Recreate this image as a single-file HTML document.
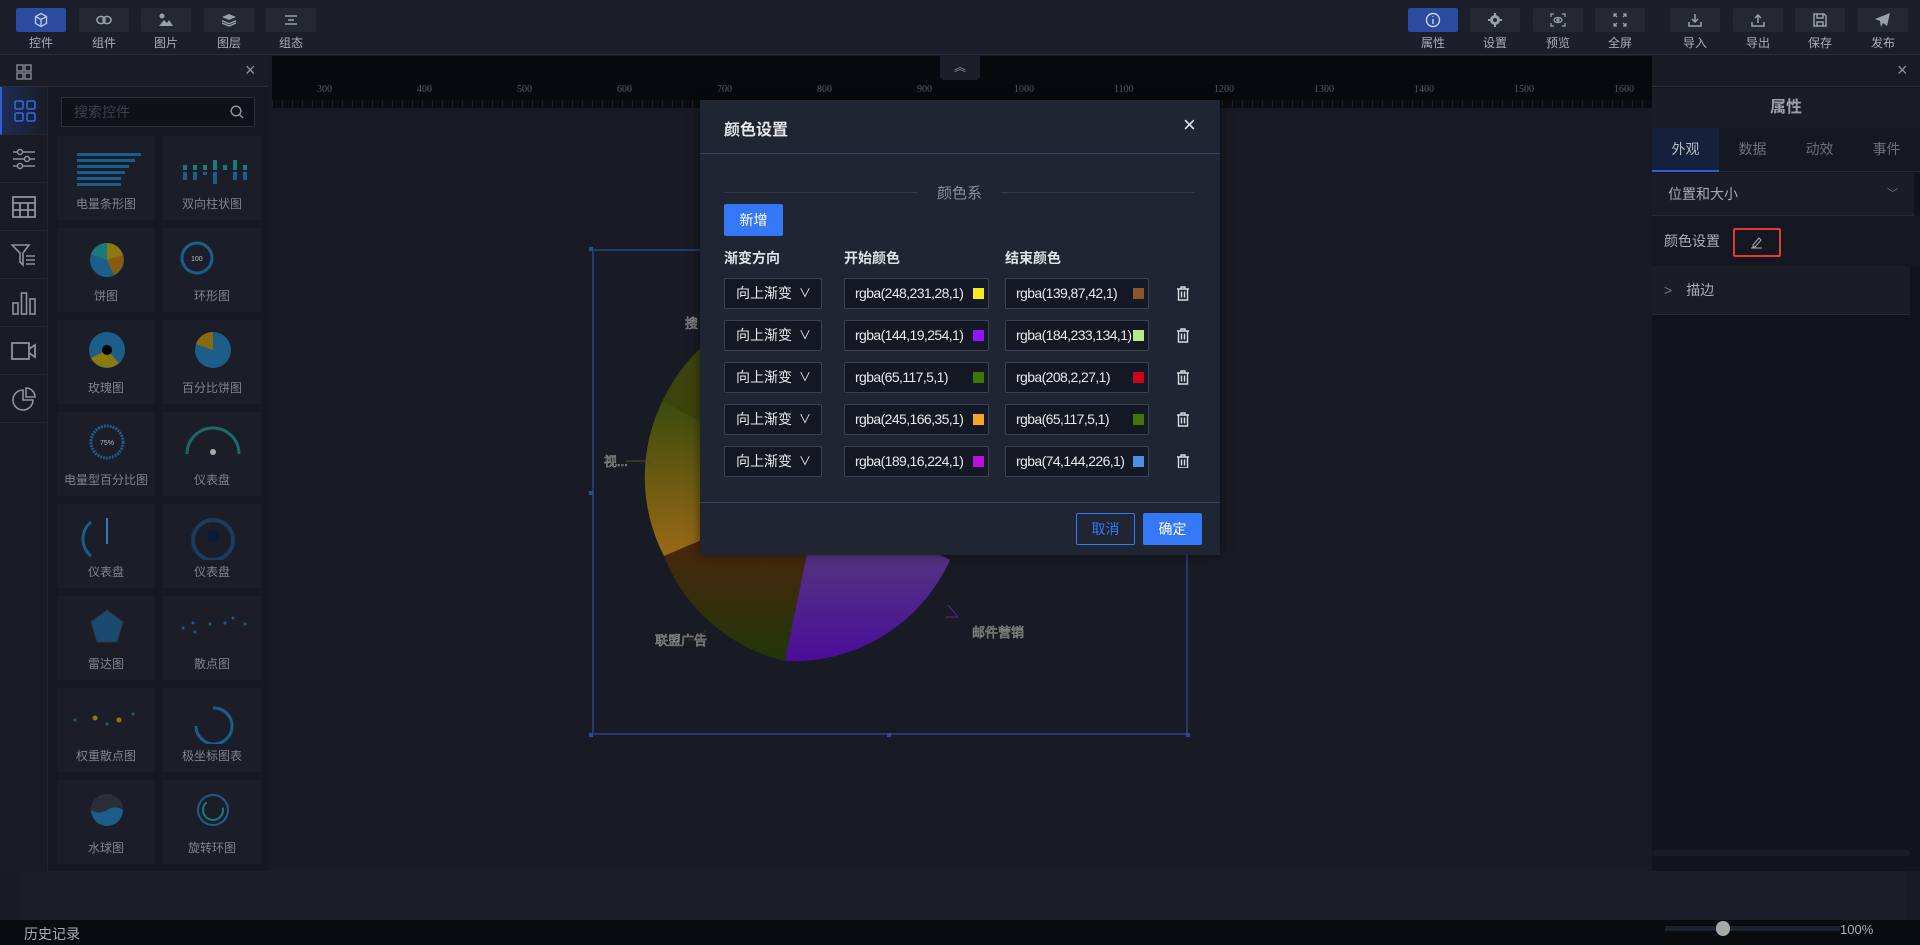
<!DOCTYPE html>
<html><head><meta charset="utf-8"><style>
*{margin:0;padding:0;box-sizing:border-box}
body{width:1920px;height:945px;overflow:hidden;background:#181b24;font-family:"Liberation Sans","Noto Sans CJK SC",sans-serif;color:#c8ccd4;position:relative;font-size:14px}
.abs{position:absolute}
.top{left:0;top:0;width:1920px;height:55px;background:#1c1f29;border-bottom:1px solid #2a2e3a}
.tb{position:absolute;top:8px;width:50px;height:24px;background:#242833;border-radius:2px;display:flex;align-items:center;justify-content:center}
.tb.on{background:#2a4b9e}
.tl{position:absolute;top:34px;width:50px;text-align:center;font-size:12px;color:#a8adb8}
.card{position:absolute;width:98px;height:84px;background:#1b1e28}
.card span{position:absolute;left:0;right:0;bottom:8px;text-align:center;font-size:12px;color:#7d8390}
.ic{position:absolute;left:0;width:47px;height:48px;border-bottom:1px solid #232733;display:flex;align-items:center;justify-content:center}
.in{position:absolute;height:31px;background:#141824;border:1px solid #3a4254;border-radius:2px;color:#e6e8ec;font-size:14px;line-height:29px;white-space:nowrap}
.in.c{font-size:14px;letter-spacing:-0.6px;padding-left:10px}
.sw{position:absolute;right:4px;top:9px;width:11px;height:11px}
</style></head><body>

<div class="abs top">
 <div class="tb on" style="left:16px"><svg width="16" height="16" viewBox="0 0 16 16" fill="none" stroke="#b9c6e8" stroke-width="1.4"><path d="M8 1.5l5.5 3v7L8 14.5 2.5 11.5v-7zM2.5 4.5L8 7.5l5.5-3M8 7.5v7"/></svg></div><div class="tl" style="left:16px">控件</div>
 <div class="tb" style="left:79px"><svg width="16" height="10" viewBox="0 0 16 10" fill="none" stroke="#9aa0ab" stroke-width="1.6"><rect x="1" y="1.5" width="8" height="7" rx="3.5"/><rect x="7" y="1.5" width="8" height="7" rx="3.5"/></svg></div><div class="tl" style="left:79px">组件</div>
 <div class="tb" style="left:141px"><svg width="16" height="14" viewBox="0 0 16 14" fill="#9aa0ab"><circle cx="4" cy="3" r="2.5"/><path d="M1 13l5-6 3 3 2-3 4 6z"/></svg></div><div class="tl" style="left:141px">图片</div>
 <div class="tb" style="left:204px"><svg width="16" height="14" viewBox="0 0 16 14" fill="#9aa0ab"><path d="M8 1l7 3-7 3-7-3z"/><path d="M1 7l7 3 7-3v1.5l-7 3-7-3z"/><path d="M1 10l7 3 7-3" stroke="#9aa0ab" fill="none" stroke-width="1.3"/></svg></div><div class="tl" style="left:204px">图层</div>
 <div class="tb" style="left:266px"><svg width="14" height="10" viewBox="0 0 14 10" stroke="#9aa0ab" stroke-width="1.4"><path d="M1 1h12M4 5h6M1 9h12"/></svg></div><div class="tl" style="left:266px">组态</div>

 <div class="tb on" style="left:1408px"><svg width="16" height="16" viewBox="0 0 16 16" fill="none" stroke="#c9d3ee" stroke-width="1.4"><circle cx="8" cy="8" r="6.5"/><path d="M8 7v5M8 4.2v.8"/></svg></div><div class="tl" style="left:1408px">属性</div>
 <div class="tb" style="left:1470px"><svg width="14" height="14" viewBox="0 0 14 14" fill="#9aa0ab"><circle cx="7" cy="7" r="5"/><path d="M6 0h2v14H6zM0 6h14v2H0z"/><circle cx="7" cy="7" r="2" fill="#242833"/></svg></div><div class="tl" style="left:1470px">设置</div>
 <div class="tb" style="left:1533px"><svg width="16" height="14" viewBox="0 0 16 14" fill="none" stroke="#9aa0ab" stroke-width="1.3"><path d="M1 4V1h3M12 1h3v3M15 10v3h-3M4 13H1v-3"/><ellipse cx="8" cy="7" rx="4" ry="2.5"/><circle cx="8" cy="7" r="1" fill="#9aa0ab"/></svg></div><div class="tl" style="left:1533px">预览</div>
 <div class="tb" style="left:1595px"><svg width="14" height="14" viewBox="0 0 14 14" fill="none" stroke="#9aa0ab" stroke-width="1.3"><path d="M1 4V1h3M1 1l3 3M13 4V1h-3M13 1l-3 3M1 10v3h3M1 13l3-3M13 10v3h-3M13 13l-3-3"/></svg></div><div class="tl" style="left:1595px">全屏</div>
 <div class="tb" style="left:1670px"><svg width="14" height="14" viewBox="0 0 14 14" fill="none" stroke="#9aa0ab" stroke-width="1.5"><path d="M7 1v8M4 6l3 3 3-3M1 9v4h12V9"/></svg></div><div class="tl" style="left:1670px">导入</div>
 <div class="tb" style="left:1733px"><svg width="14" height="14" viewBox="0 0 14 14" fill="none" stroke="#9aa0ab" stroke-width="1.5"><path d="M7 10V2M4 5l3-3 3 3M1 9v4h12V9"/></svg></div><div class="tl" style="left:1733px">导出</div>
 <div class="tb" style="left:1795px"><svg width="14" height="14" viewBox="0 0 14 14" fill="none" stroke="#9aa0ab" stroke-width="1.5"><path d="M1 1h10l2 2v10H1z"/><path d="M4 1v4h6V1M4 13V9h6v4"/></svg></div><div class="tl" style="left:1795px">保存</div>
 <div class="tb" style="left:1858px"><svg width="16" height="14" viewBox="0 0 16 14" fill="#9aa0ab"><path d="M15 0L0 6l5 2 1 6 2-4 4 3z"/></svg></div><div class="tl" style="left:1858px">发布</div>
</div>

<!-- ruler -->
<div class="abs" style="left:272px;top:56px;width:1380px;height:44px;background:#08090d"></div>
<div class="abs" style="left:272px;top:100px;width:1380px;height:8px;background:#0b0c11"></div>
<div class="abs" style="left:940px;top:56px;width:40px;height:24px;background:#1c1f29;border-radius:0 0 4px 4px;text-align:center;color:#8a8f9a;font-size:12px;line-height:22px">︽</div>
<div class="abs" style="left:272px;top:84px;width:1380px;font-family:'Liberation Serif',serif;font-size:10px;color:#555a64">
 <span class="abs" style="left:45px">300</span><span class="abs" style="left:145px">400</span><span class="abs" style="left:245px">500</span><span class="abs" style="left:345px">600</span><span class="abs" style="left:445px">700</span><span class="abs" style="left:545px">800</span><span class="abs" style="left:645px">900</span><span class="abs" style="left:742px">1000</span><span class="abs" style="left:842px">1100</span><span class="abs" style="left:942px">1200</span><span class="abs" style="left:1042px">1300</span><span class="abs" style="left:1142px">1400</span><span class="abs" style="left:1242px">1500</span><span class="abs" style="left:1342px">1600</span>
</div>
<div class="abs" style="left:272px;top:100px;width:1380px;height:7px;background:repeating-linear-gradient(90deg,#2a2d36 0 1px,transparent 1px 10px);opacity:.6"></div>

<!-- canvas chart -->
<div class="abs" style="left:592px;top:249px;width:596px;height:486px;border:2px solid #24396e"></div>
<svg class="abs" style="left:0;top:0" width="1920" height="945">
 <defs>
  <linearGradient id="g1" x1="0" y1="1" x2="0" y2="0"><stop offset="0" stop-color="#9a6a15"/><stop offset="1" stop-color="#3a4a0e"/></linearGradient>
  <linearGradient id="g2" x1="0" y1="1" x2="0" y2="0"><stop offset="0" stop-color="#22360a"/><stop offset="1" stop-color="#5a1e0e"/></linearGradient>
  <linearGradient id="g3" x1="0" y1="1" x2="0" y2="0"><stop offset="0" stop-color="#4a0d9a"/><stop offset="1" stop-color="#5c4a70"/></linearGradient>
 </defs>
 <path d="M820 490 L663 400 A172 172 0 0 0 664 556 Z" fill="url(#g1)"/>
 <path d="M820 490 L664 556 A172 172 0 0 0 785 661 Z" fill="url(#g2)"/>
 <path d="M820 490 L785 661 A172 172 0 0 0 950 560 Z" fill="url(#g3)"/>
 <path d="M820 490 L710 340 A172 172 0 0 0 663 400 Z" fill="#3c430c"/>
 <g fill="#2b4a9a"><rect x="589" y="247" width="4" height="4"/><rect x="589" y="491" width="4" height="4"/><rect x="589" y="733" width="4" height="4"/><rect x="887" y="733" width="4" height="4"/><rect x="1186" y="733" width="4" height="4"/></g>
 <path d="M626 461h20l5 3" stroke="#55501a" fill="none"/>
 <path d="M688 640h10l8-10" stroke="#3a3a10" fill="none"/>
 <path d="M946 617h12l-10-12" stroke="#5a2a8a" fill="none"/>
 <g font-size="13" fill="#222" stroke="#999" stroke-width=".6" font-family="Noto Sans CJK SC"><text x="604" y="466">视...</text><text x="655" y="645">联盟广告</text><text x="972" y="637">邮件营销</text><text x="685" y="328">搜</text></g>
</svg>

<!-- left panel -->
<div class="abs" style="left:0;top:56px;width:268px;height:815px;background:#161922">
 <div class="abs" style="left:0;top:0;width:268px;height:31px;border-bottom:1px solid #2a2e3a;background:#1a1d26"></div>
 <svg class="abs" style="left:16px;top:8px" width="16" height="16" fill="none" stroke="#8d929c" stroke-width="1.3"><rect x="1" y="1" width="6" height="6"/><rect x="9" y="1" width="6" height="6"/><rect x="1" y="9" width="6" height="6"/><rect x="9" y="9" width="6" height="6"/></svg>
 <div class="abs" style="left:245px;top:4px;color:#8d929c;font-size:18px">×</div>
 <div class="abs" style="left:0;top:31px;width:48px;height:784px;background:#191c25;border-right:1px solid #232733"></div>
</div>
<div class="ic" style="top:87px;background:linear-gradient(90deg,#1e2c55,#191c25);border-left:2px solid #2f5fd0"><svg width="24" height="24" fill="none" stroke="#2f5fd0" stroke-width="1.8"><rect x="2" y="2" width="8" height="8" rx="1.5"/><rect x="14" y="2" width="8" height="8" rx="1.5"/><rect x="2" y="14" width="8" height="8" rx="1.5"/><rect x="14" y="14" width="8" height="8" rx="1.5"/></svg></div>
<div class="ic" style="top:135px"><svg width="24" height="22" fill="none" stroke="#8d929c" stroke-width="1.5"><path d="M1 4h22M1 11h22M1 18h22"/><circle cx="8" cy="4" r="2.5" fill="#191c25"/><circle cx="15" cy="11" r="2.5" fill="#191c25"/><circle cx="8" cy="18" r="2.5" fill="#191c25"/></svg></div>
<div class="ic" style="top:183px"><svg width="24" height="22" fill="none" stroke="#8d929c" stroke-width="1.8"><rect x="1" y="1" width="22" height="20"/><path d="M1 7h22M1 14h22M8 7v14M16 7v14"/></svg></div>
<div class="ic" style="top:231px"><svg width="26" height="24" fill="none" stroke="#8d929c" stroke-width="1.6"><path d="M1 2h17l-6 8v12l-3-3V10z"/><path d="M15 13h9M15 17h9M15 21h9"/></svg></div>
<div class="ic" style="top:279px"><svg width="24" height="24" fill="none" stroke="#8d929c" stroke-width="1.6"><rect x="1" y="12" width="5" height="11"/><rect x="9.5" y="2" width="5" height="21"/><rect x="18" y="8" width="5" height="15"/></svg></div>
<div class="ic" style="top:327px"><svg width="26" height="20" fill="none" stroke="#8d929c" stroke-width="1.8"><rect x="1" y="2" width="17" height="16"/><path d="M18 8l6-4v12l-6-4"/></svg></div>
<div class="ic" style="top:375px"><svg width="24" height="24" fill="none" stroke="#8d929c" stroke-width="1.6"><path d="M11 3a10 10 0 1 0 10 10H11z"/><path d="M14 1a9 9 0 0 1 9 9h-9z"/></svg></div>

<div class="abs" style="left:61px;top:97px;width:194px;height:30px;background:#0f1118;border:1px solid #2c303b;border-radius:2px;font-size:14px;color:#3c414b;line-height:28px;padding-left:12px">搜索控件
 <svg class="abs" style="right:10px;top:7px" width="14" height="14" fill="none" stroke="#8d929c" stroke-width="1.5"><circle cx="6" cy="6" r="4.8"/><path d="M9.5 9.5L13 13"/></svg></div>

<div class="card" style="left:57px;top:136px"><svg class="abs" style="left:15px;top:15px" width="70" height="35"><g fill="#1b5e8a"><rect x="5" y="2" width="64" height="3"/><rect x="5" y="8" width="58" height="3"/><rect x="5" y="14" width="52" height="3"/><rect x="5" y="20" width="48" height="3"/><rect x="5" y="26" width="44" height="3"/><rect x="5" y="32" width="44" height="3"/></g></svg><span>电量条形图</span></div>
<div class="card" style="left:163px;top:136px"><svg class="abs" style="left:15px;top:12px" width="75" height="42"><g fill="#177d7a"><rect x="5" y="17" width="4" height="5"/><rect x="15" y="17" width="4" height="5"/><rect x="25" y="17" width="4" height="5"/><rect x="35" y="12" width="4" height="10"/><rect x="45" y="17" width="4" height="5"/><rect x="55" y="12" width="4" height="10"/><rect x="65" y="17" width="4" height="5"/></g><g fill="#1b5e8a"><rect x="5" y="24" width="4" height="8"/><rect x="15" y="24" width="4" height="8"/><rect x="25" y="24" width="4" height="3"/><rect x="35" y="24" width="4" height="12"/><rect x="55" y="24" width="4" height="8"/><rect x="65" y="24" width="4" height="8"/></g></svg><span>双向柱状图</span></div>
<div class="card" style="left:57px;top:228px"><svg class="abs" style="left:30px;top:12px" width="40" height="40"><circle cx="20" cy="20" r="17" fill="#1b5e8a"/><path d="M20 20V3a17 17 0 0 1 16 12z" fill="#8a7a10"/><path d="M20 20l16-5a17 17 0 0 1-9 20z" fill="#8a5a10"/><path d="M20 20L4 14A17 17 0 0 1 20 3z" fill="#1a7a7a"/></svg><span>饼图</span></div>
<div class="card" style="left:163px;top:228px"><svg class="abs" style="left:14px;top:10px" width="70" height="40"><circle cx="20" cy="20" r="15" fill="none" stroke="#1b5e8a" stroke-width="3"/><text x="14" y="23" font-size="7" fill="#bbb">100</text></svg><span>环形图</span></div>
<div class="card" style="left:57px;top:320px"><svg class="abs" style="left:30px;top:10px" width="40" height="40"><circle cx="20" cy="20" r="18" fill="#1b5e8a"/><path d="M20 20L4 28A18 18 0 0 0 32 33z" fill="#8a7a10"/><circle cx="20" cy="20" r="5" fill="#000"/></svg><span>玫瑰图</span></div>
<div class="card" style="left:163px;top:320px"><svg class="abs" style="left:30px;top:10px" width="40" height="40"><circle cx="20" cy="20" r="18" fill="#1b5e8a"/><path d="M20 20V2A18 18 0 0 0 3 14z" fill="#8a6a10"/></svg><span>百分比饼图</span></div>
<div class="card" style="left:57px;top:412px"><svg class="abs" style="left:30px;top:10px" width="40" height="40"><circle cx="20" cy="20" r="16" fill="none" stroke="#1b5e8a" stroke-width="3" stroke-dasharray="2 1"/><text x="13" y="23" font-size="7" fill="#bbb">75%</text></svg><span>电量型百分比图</span></div>
<div class="card" style="left:163px;top:412px"><svg class="abs" style="left:20px;top:10px" width="60" height="35"><path d="M4 32A26 26 0 0 1 56 32" fill="none" stroke="#1b6a6a" stroke-width="3"/><circle cx="30" cy="30" r="3" fill="#aaa"/></svg><span>仪表盘</span></div>
<div class="card" style="left:57px;top:504px"><svg class="abs" style="left:22px;top:8px" width="56" height="48"><path d="M12 44A22 22 0 0 1 12 10" fill="none" stroke="#1b5e8a" stroke-width="3"/><path d="M28 6v26" stroke="#3a7ab0" stroke-width="2"/></svg><span>仪表盘</span></div>
<div class="card" style="left:163px;top:504px"><svg class="abs" style="left:22px;top:8px" width="56" height="48"><circle cx="28" cy="28" r="20" fill="none" stroke="#1a3c5e" stroke-width="4"/><circle cx="28" cy="24" r="6" fill="#0a1a3a"/></svg><span>仪表盘</span></div>
<div class="card" style="left:57px;top:596px"><svg class="abs" style="left:30px;top:8px" width="40" height="44"><path d="M20 6L36 18 30 38H10L4 18z" fill="#1b4a70" stroke="#333"/></svg><span>雷达图</span></div>
<div class="card" style="left:163px;top:596px"><svg class="abs" style="left:12px;top:12px" width="75" height="40" fill="#1b5e8a"><circle cx="8" cy="20" r="1.5"/><circle cx="18" cy="15" r="1.5"/><circle cx="20" cy="24" r="1.5"/><circle cx="35" cy="16" r="1.5"/><circle cx="50" cy="15" r="1.5"/><circle cx="58" cy="10" r="1.5"/><circle cx="70" cy="16" r="1.5"/></svg><span>散点图</span></div>
<div class="card" style="left:57px;top:688px"><svg class="abs" style="left:10px;top:12px" width="80" height="40" fill="#1b5e8a"><circle cx="8" cy="20" r="1.5"/><circle cx="28" cy="18" r="2.5" fill="#8a7a10"/><circle cx="40" cy="24" r="1.5"/><circle cx="52" cy="20" r="2.5" fill="#8a7a10"/><circle cx="66" cy="14" r="1.5"/></svg><span>权重散点图</span></div>
<div class="card" style="left:163px;top:688px"><svg class="abs" style="left:25px;top:8px" width="50" height="48"><path d="M8 30A18 18 0 1 0 25 12" fill="none" stroke="#1b5e8a" stroke-width="3"/></svg><span>极坐标图表</span></div>
<div class="card" style="left:57px;top:780px"><svg class="abs" style="left:30px;top:8px" width="40" height="44"><circle cx="20" cy="22" r="16" fill="#1b5e8a"/><path d="M4 22a16 16 0 0 1 32 0q-8-5-16 0t-16 0z" fill="#2a2e38"/></svg><span>水球图</span></div>
<div class="card" style="left:163px;top:780px"><svg class="abs" style="left:30px;top:8px" width="40" height="44"><circle cx="20" cy="22" r="15" fill="none" stroke="#1b5e8a" stroke-width="2"/><circle cx="20" cy="22" r="10" fill="none" stroke="#1a7a7a" stroke-width="2" stroke-dasharray="40 20"/></svg><span>旋转环图</span></div>

<!-- right panel -->
<div class="abs" style="left:1652px;top:56px;width:268px;height:815px;background:#11141c">
 <div class="abs" style="left:0;top:0;width:268px;height:31px;background:#181b24;border-bottom:1px solid #2a2e3a"></div>
 <div class="abs" style="left:245px;top:4px;color:#8d929c;font-size:18px">×</div>
 <div class="abs" style="left:0;top:32px;width:268px;height:40px;background:#1a1d26;text-align:center;line-height:40px;font-size:16px;font-weight:bold;color:#9a9fa8">属性</div>
 <div class="abs" style="left:0;top:72px;width:268px;height:44px;background:#151821;border-bottom:1px solid #262a35;font-size:14px;color:#6a707a;line-height:42px">
  <div class="abs" style="left:0;width:67px;height:44px;background:#15213c;border-bottom:2px solid #2f5fd0;text-align:center;color:#b5bac4">外观</div>
  <div class="abs" style="left:67px;width:67px;text-align:center">数据</div>
  <div class="abs" style="left:134px;width:67px;text-align:center">动效</div>
  <div class="abs" style="left:201px;width:67px;text-align:center">事件</div>
 </div>
 <div class="abs" style="left:0;top:117px;width:262px;height:43px;background:#1a1d26;border-bottom:1px solid #262a35;line-height:42px;padding-left:16px;color:#a8adb8">位置和大小<span class="abs" style="right:16px;color:#6a707a;font-size:11px">﹀</span></div>
 <div class="abs" style="left:0;top:160px;width:268px;height:50px;background:#151821;line-height:50px;padding-left:12px;color:#a8adb8">颜色设置</div>
 <div class="abs" style="left:81px;top:172px;width:48px;height:29px;border:2px solid #e03b36;border-radius:2px"><svg class="abs" style="left:15px;top:6px" width="14" height="13" fill="none" stroke="#a8adb8" stroke-width="1"><path d="M3 9l6-7 2 2-6 7H3zM1 12h11"/></svg></div>
 <div class="abs" style="left:0;top:210px;width:258px;height:49px;background:#1a1d26;border-bottom:1px solid #262a35;line-height:48px;padding-left:12px;color:#a8adb8"><span style="color:#777;margin-right:14px">&gt;</span>描边</div>
 <div class="abs" style="left:0;top:794px;width:258px;height:6px;background:#1a1d26;border-radius:3px"></div>
</div>

<!-- bottom -->
<div class="abs" style="left:20px;top:871px;width:1885px;height:49px;background:#1b1e28"></div>
<div class="abs" style="left:0;top:920px;width:1920px;height:25px;background:#0a0b0f"></div>
<div class="abs" style="left:24px;top:924px;font-size:14px;color:#a8adb8">历史记录</div>
<div class="abs" style="left:1665px;top:926px;width:175px;height:5px;background:#1c2230"></div>
<div class="abs" style="left:1716px;top:921px;width:14px;height:15px;border-radius:7px;background:#a8a8a8"></div>
<div class="abs" style="left:1840px;top:922px;font-size:13px;color:#a8adb8">100%</div>

<!-- modal -->
<div class="abs" style="left:700px;top:100px;width:520px;height:455px;background:#202534;box-shadow:0 0 10px rgba(0,0,0,.5)">
 <div class="abs" style="left:24px;top:16px;font-size:16px;font-weight:bold;color:#e6e8ec">颜色设置</div>
 <div class="abs" style="left:483px;top:12px;font-size:22px;color:#e6e8ec">×</div>
 <div class="abs" style="left:0;top:53px;width:520px;height:1px;background:#3a4258"></div>
 <div class="abs" style="left:24px;top:92px;width:194px;height:1px;background:#343a4a"></div>
 <div class="abs" style="left:301px;top:92px;width:194px;height:1px;background:#343a4a"></div>
 <div class="abs" style="left:237px;top:82px;font-size:15px;color:#8a909b">颜色系</div>
 <div class="abs" style="left:24px;top:104px;width:59px;height:32px;background:#3478f6;border-radius:2px;color:#fff;text-align:center;line-height:32px;font-size:14px">新增</div>
 <div class="abs" style="left:24px;top:148px;font-size:14px;font-weight:bold;color:#e0e3e8">渐变方向</div>
 <div class="abs" style="left:144px;top:148px;font-size:14px;font-weight:bold;color:#e0e3e8">开始颜色</div>
 <div class="abs" style="left:305px;top:148px;font-size:14px;font-weight:bold;color:#e0e3e8">结束颜色</div>
</div>
<div class="abs" style="left:700px;top:502px;width:520px;height:1px;background:#3a4258"></div>
<div class="abs" style="left:1076px;top:513px;width:59px;height:32px;border:1px solid #3478f6;border-radius:2px;color:#3478f6;text-align:center;line-height:30px">取消</div>
<div class="abs" style="left:1143px;top:513px;width:59px;height:32px;background:#3478f6;border-radius:2px;color:#fff;text-align:center;line-height:32px">确定</div>

<div class="in" style="left:724px;top:278px;width:98px;padding-left:11px">向上渐变<span class="abs" style="right:10px;font-size:12px">∨</span></div>
<div class="in c" style="left:844px;top:278px;width:145px">rgba(248,231,28,1)<i class="sw" style="background:rgb(248,231,28)"></i></div>
<div class="in c" style="left:1005px;top:278px;width:144px">rgba(139,87,42,1)<i class="sw" style="background:rgb(139,87,42)"></i></div>
<div class="in" style="left:724px;top:320px;width:98px;padding-left:11px">向上渐变<span class="abs" style="right:10px;font-size:12px">∨</span></div>
<div class="in c" style="left:844px;top:320px;width:145px">rgba(144,19,254,1)<i class="sw" style="background:rgb(144,19,254)"></i></div>
<div class="in c" style="left:1005px;top:320px;width:144px">rgba(184,233,134,1)<i class="sw" style="background:rgb(184,233,134)"></i></div>
<div class="in" style="left:724px;top:362px;width:98px;padding-left:11px">向上渐变<span class="abs" style="right:10px;font-size:12px">∨</span></div>
<div class="in c" style="left:844px;top:362px;width:145px">rgba(65,117,5,1)<i class="sw" style="background:rgb(65,117,5)"></i></div>
<div class="in c" style="left:1005px;top:362px;width:144px">rgba(208,2,27,1)<i class="sw" style="background:rgb(208,2,27)"></i></div>
<div class="in" style="left:724px;top:404px;width:98px;padding-left:11px">向上渐变<span class="abs" style="right:10px;font-size:12px">∨</span></div>
<div class="in c" style="left:844px;top:404px;width:145px">rgba(245,166,35,1)<i class="sw" style="background:rgb(245,166,35)"></i></div>
<div class="in c" style="left:1005px;top:404px;width:144px">rgba(65,117,5,1)<i class="sw" style="background:rgb(65,117,5)"></i></div>
<div class="in" style="left:724px;top:446px;width:98px;padding-left:11px">向上渐变<span class="abs" style="right:10px;font-size:12px">∨</span></div>
<div class="in c" style="left:844px;top:446px;width:145px">rgba(189,16,224,1)<i class="sw" style="background:rgb(189,16,224)"></i></div>
<div class="in c" style="left:1005px;top:446px;width:144px">rgba(74,144,226,1)<i class="sw" style="background:rgb(74,144,226)"></i></div>

<svg class="abs" style="left:1176px;top:286px" width="14" height="182" fill="none" stroke="#d8dbe0" stroke-width="1.4">
 <g id="t"><path d="M1 3h12M5 3V1h4v2M2.5 3v11h9V3M5.5 5.5v6M8.5 5.5v6"/></g>
 <use href="#t" y="42"/><use href="#t" y="84"/><use href="#t" y="126"/><use href="#t" y="168"/>
</svg>
</body></html>
